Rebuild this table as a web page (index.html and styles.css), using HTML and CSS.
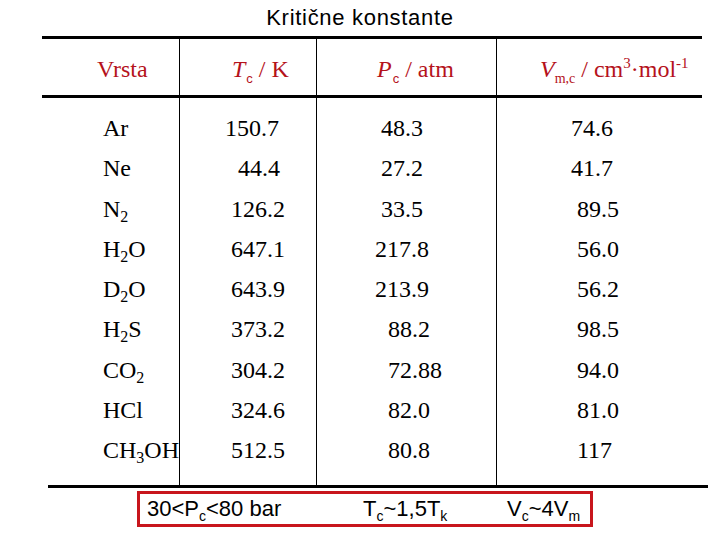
FILE: index.html
```html
<!DOCTYPE html>
<html lang="hr">
<head>
  <meta charset="UTF-8">
  <title>Kritične konstante</title>
  <link rel="stylesheet" href="styles.css">
</head>
<body>
  <h1 class="title">Kritične konstante</h1>

  <table class="consts">
    <thead>
      <tr>
        <th class="c1">Vrsta</th>
        <th class="c2"><i>T</i><sub class="sans">c</sub> / K</th>
        <th class="c3"><i>P</i><sub class="sans">c</sub> / atm</th>
        <th class="c4"><i>V</i><sub>m,c</sub> / cm<sup>3</sup>·mol<sup>-1</sup></th>
      </tr>
    </thead>
    <tbody>
      <tr><td class="c1">Ar</td><td class="c2 pl">150.7</td><td class="c3">48.3</td><td class="c4 pl">74.6</td></tr>
      <tr><td class="c1">Ne</td><td class="c2 pr">44.4</td><td class="c3">27.2</td><td class="c4 pl">41.7</td></tr>
      <tr><td class="c1">N<sub>2</sub></td><td class="c2">126.2</td><td class="c3">33.5</td><td class="c4">89.5</td></tr>
      <tr><td class="c1">H<sub>2</sub>O</td><td class="c2">647.1</td><td class="c3 pl">217.8</td><td class="c4">56.0</td></tr>
      <tr><td class="c1">D<sub>2</sub>O</td><td class="c2">643.9</td><td class="c3 pl">213.9</td><td class="c4">56.2</td></tr>
      <tr><td class="c1">H<sub>2</sub>S</td><td class="c2">373.2</td><td class="c3 pr">88.2</td><td class="c4">98.5</td></tr>
      <tr><td class="c1">CO<sub>2</sub></td><td class="c2">304.2</td><td class="c3 pr">72.88</td><td class="c4">94.0</td></tr>
      <tr><td class="c1">HCl</td><td class="c2">324.6</td><td class="c3 pr">82.0</td><td class="c4">81.0</td></tr>
      <tr><td class="c1">CH<sub>3</sub>OH</td><td class="c2">512.5</td><td class="c3 pr">80.8</td><td class="c4">117</td></tr>
    </tbody>
  </table>
  <div class="rule"></div>

  <!-- rules of thumb -->
  <div class="note">
    <span class="n1">30&lt;P<sub>c</sub>&lt;80 bar</span>
    <span class="n2">T<sub>c</sub>~1,5T<sub>k</sub></span>
    <span class="n3">V<sub>c</sub>~4V<sub>m</sub></span>
  </div>
</body>
</html>
```

FILE: styles.css
```css
:root {
  --ink: #000000;
  --head-red: #b5121b;
  --box-red: #c8161d;
}
* { margin:0; padding:0; box-sizing:border-box; }
body {
  font-family: "Liberation Serif", "Times New Roman", serif;
  color:var(--ink); background:#fff;
  width:720px; height:540px; overflow:hidden;
}
.title {
  font-family: "Liberation Sans", Arial, sans-serif;
  font-weight:normal; font-size:22px; letter-spacing:0.7px;
  line-height:26px; padding:5px 0; height:36px;
  text-align:center;
}
.consts {
  border-collapse:separate; border-spacing:0;
  margin-left:42px; width:660px; table-layout:fixed;
  font-size:24px;
}
.consts th, .consts td { text-align:left; white-space:nowrap; padding:0; }
.consts th {
  font-weight:normal; color:var(--head-red);
  border-top:3px solid var(--ink); border-bottom:3px solid var(--ink);
  padding-top:5px; line-height:51px;
}
.consts td { line-height:40.25px; }
.consts tbody tr:first-child td { padding-top:10px; }
.consts tbody tr:last-child td { padding-bottom:15px; }
.consts .c1, .consts .c2, .consts .c3 { border-right:1px solid var(--ink); }
.consts .c1 { width:138px; }
.consts .c2 { width:137px; }
.consts .c3 { width:180px; }
.consts .c4 { width:205px; }
td.c1 { padding-left:61px; }
td.c2 { padding-left:51px; }
td.c3 { padding-left:64px; }
td.c4 { padding-left:80px; }
th.c1 { padding-left:55px; }
th.c2 { padding-left:52px; }
th.c3 { padding-left:60px; }
th.c4 { padding-left:43px; }
.pl { text-indent:-6px; }
.pr { text-indent:7px; }

sub, sup { font-size:16px; line-height:0; }
sub { vertical-align:-5px; }
sup { vertical-align:9px; font-size:15px; }
th sub { font-size:14px; vertical-align:-6px; }
sub.sans { font-family:"Liberation Sans", Arial, sans-serif; font-size:13px; margin-left:1px; }

.rule {
  margin-left:48px; width:660px; height:3px; background:var(--ink);
}
.note {
  display:flex;
  margin:3px 0 0 137px; width:456px; height:36px;
  border:3px solid var(--box-red);
  padding-left:7px;
  font-family:"Liberation Sans", Arial, sans-serif;
  font-size:22px; line-height:30px;
}
.note sub { font-size:14px; vertical-align:-5px; }
.n1 { width:216px; }
.n2 { width:144px; }
```
